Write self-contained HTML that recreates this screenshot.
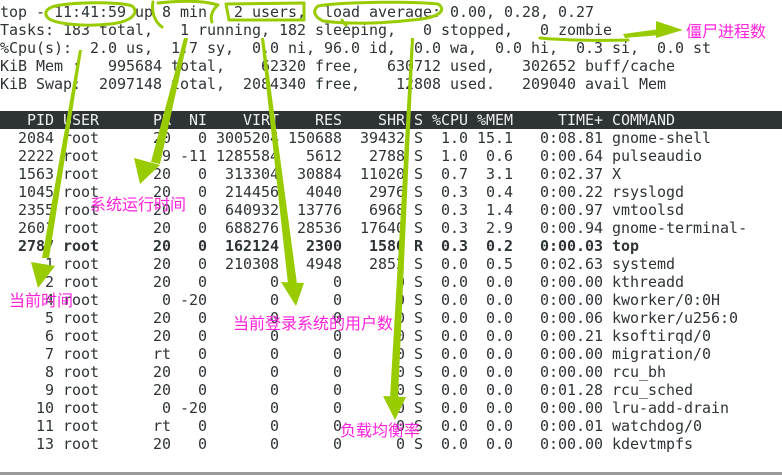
<!DOCTYPE html>
<html><head><meta charset="utf-8"><style>
html,body{margin:0;padding:0;background:#fff;width:782px;height:475px;overflow:hidden;position:relative}
pre{margin:0;position:absolute;left:0;font-family:"DejaVu Sans Mono","Liberation Mono",monospace;font-size:15px;line-height:18px;color:#2e3436;white-space:pre;letter-spacing:-0.03px}
#sum{top:3px}
#hdr{top:111px;width:782px;background:#2e3436;color:#eeeeec;height:18px}
#rows{top:129px}
b{font-weight:bold}
.ann{position:absolute;font-family:"Noto Sans CJK SC","WenQuanYi Zen Hei",sans-serif;color:#ff22dd;font-size:16px;line-height:17px;white-space:nowrap}
svg{position:absolute;left:0;top:0}
#bot{position:absolute;left:0;top:472px;width:782px;height:3px;background:#9a9a9a}
</style></head><body>
<pre id="sum">top - 11:41:59 up 8 min,  2 users,  load average: 0.00, 0.28, 0.27
Tasks: 183 total,   1 running, 182 sleeping,   0 stopped,   0 zombie
%Cpu(s):  2.0 us,  1.7 sy,  0.0 ni, 96.0 id,  0.0 wa,  0.0 hi,  0.3 si,  0.0 st
KiB Mem :   995684 total,    62320 free,   630712 used,   302652 buff/cache
KiB Swap:  2097148 total,  2084340 free,    12808 used.   209040 avail Mem</pre>
<pre id="hdr">   PID USER      PR  NI    VIRT    RES    SHR S %CPU %MEM     TIME+ COMMAND</pre>
<pre id="rows">  2084 root      20   0 3005204 150688  39432 S  1.0 15.1   0:08.81 gnome-shell
  2222 root       9 -11 1285584   5612   2788 S  1.0  0.6   0:00.64 pulseaudio
  1563 root      20   0  313304  30884  11020 S  0.7  3.1   0:02.37 X
  1045 root      20   0  214456   4040   2976 S  0.3  0.4   0:00.22 rsyslogd
  2355 root      20   0  640932  13776   6968 S  0.3  1.4   0:00.97 vmtoolsd
  2601 root      20   0  688276  28536  17640 S  0.3  2.9   0:00.94 gnome-terminal-
<b>  2787 root      20   0  162124   2300   1580 R  0.3  0.2   0:00.03 top</b>
     1 root      20   0  210308   4948   2852 S  0.0  0.5   0:02.63 systemd
     2 root      20   0       0      0      0 S  0.0  0.0   0:00.00 kthreadd
     4 root       0 -20       0      0      0 S  0.0  0.0   0:00.00 kworker/0:0H
     5 root      20   0       0      0      0 S  0.0  0.0   0:00.06 kworker/u256:0
     6 root      20   0       0      0      0 S  0.0  0.0   0:00.21 ksoftirqd/0
     7 root      rt   0       0      0      0 S  0.0  0.0   0:00.00 migration/0
     8 root      20   0       0      0      0 S  0.0  0.0   0:00.00 rcu_bh
     9 root      20   0       0      0      0 S  0.0  0.0   0:01.28 rcu_sched
    10 root       0 -20       0      0      0 S  0.0  0.0   0:00.00 lru-add-drain
    11 root      rt   0       0      0      0 S  0.0  0.0   0:00.01 watchdog/0
    13 root      20   0       0      0      0 S  0.0  0.0   0:00.00 kdevtmpfs</pre>
<div id="bot"></div>
<svg width="782" height="475" viewBox="0 0 782 475">
<g fill="none" stroke="#99cc00" stroke-width="3" stroke-linecap="round" stroke-linejoin="round">
<path d="M50 8 C58 2 120 1 132 6 C140 12 132 22 110 24 C85 27 55 24 48 18 C44 14 46 10 50 8"/>
<path d="M153 2 C151 12 155 22 162 27 M158 3 C185 0 205 1 218 5 C212 10 210 17 212 22"/>
<path d="M226 4 L304 3 L304 20 L229 20 L226 4"/>
<path d="M318 6 C340 2 410 1 438 4 C447 10 440 18 412 20 C380 24 345 24 323 21 C313 16 313 10 318 6 M342 20 C343 23 345 24 346 25"/>
<path d="M540 38 C560 40 600 41 628 40"/>
</g>
<g fill="#99cc00">
<polygon points="623,34 660,29 660,35 625,38"/>
<polygon points="656,21 683,30 656,38"/>
<polygon points="79,50 82,50 49,258 42,258"/>
<polygon points="31,262 55,266 38,288"/>
<polygon points="184,38 188,38 160,164 151,162"/>
<polygon points="134,158 160,165 140,184"/>
<polygon points="261,38 264,38 297,284 288,284"/>
<polygon points="281,282 304,283 296,306"/>
<polygon points="411,38 414,38 398,398 390,398"/>
<polygon points="383,396 406,397 395,420"/>
</g>
</svg>
<div class="ann" style="left:686px;top:22px">僵尸进程数</div>
<div class="ann" style="left:90px;top:195px">系统运行时间</div>
<div class="ann" style="left:9px;top:291px">当前时间</div>
<div class="ann" style="left:233px;top:314px">当前登录系统的用户数</div>
<div class="ann" style="left:340px;top:421px">负载均衡率</div>
</body></html>
